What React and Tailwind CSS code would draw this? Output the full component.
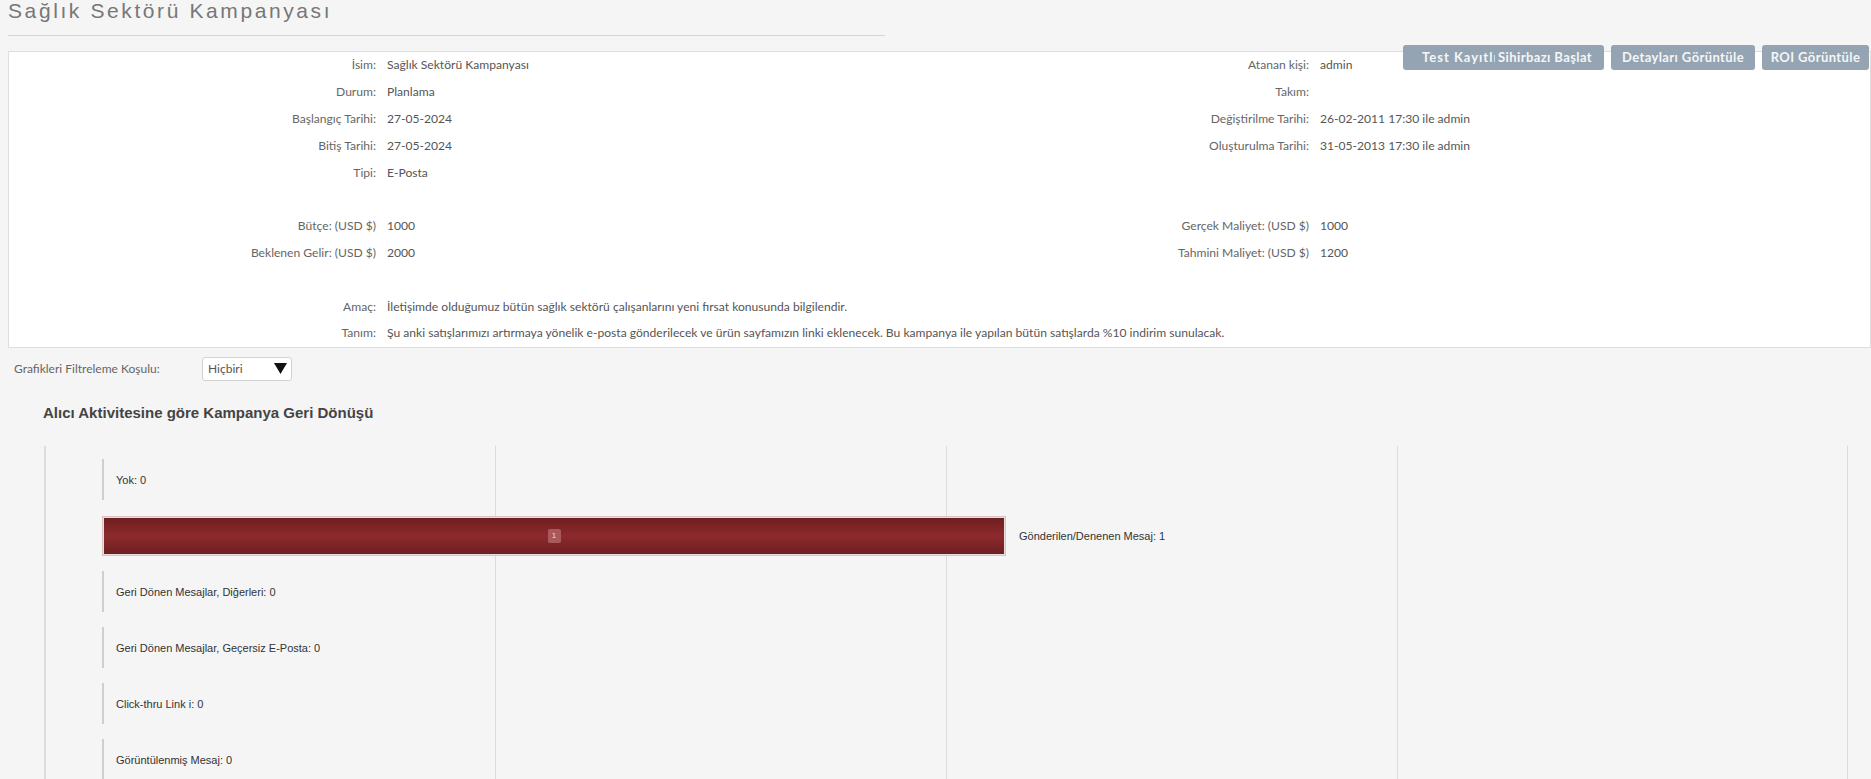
export default function App() {
  const rows = [
    ["İsim:", "Sağlık Sektörü Kampanyası", "Atanan kişi:", "admin"],
    ["Durum:", "Planlama", "Takım:", ""],
    ["Başlangıç Tarihi:", "27-05-2024", "Değiştirilme Tarihi:", "26-02-2011 17:30 ile admin"],
    ["Bitiş Tarihi:", "27-05-2024", "Oluşturulma Tarihi:", "31-05-2013 17:30 ile admin"],
    ["Tipi:", "E-Posta", "", ""],
    ["", "", "", ""],
    ["Bütçe: (USD $)", "1000", "Gerçek Maliyet: (USD $)", "1000"],
    ["Beklenen Gelir: (USD $)", "2000", "Tahmini Maliyet: (USD $)", "1200"],
    ["", "", "", ""],
  ];
  const wide = [
    ["Amaç:", "İletişimde olduğumuz bütün sağlık sektörü çalışanlarını yeni fırsat konusunda bilgilendir."],
    ["Tanım:", "Şu anki satışlarımızı artırmaya yönelik e-posta gönderilecek ve ürün sayfamızın linki eklenecek. Bu kampanya ile yapılan bütün satışlarda %10 indirim sunulacak."],
  ];
  const chartRows = [
    { label: "Yok: 0" },
    { label: "Gönderilen/Denenen Mesaj: 1", bar: true },
    { label: "Geri Dönen Mesajlar, Diğerleri: 0" },
    { label: "Geri Dönen Mesajlar, Geçersiz E-Posta: 0" },
    { label: "Click-thru Link i: 0" },
    { label: "Görüntülenmiş Mesaj: 0" },
  ];
  return (
    <div className="w-[1871px] h-[779px] overflow-hidden bg-[#f5f5f5] font-['Lato','Liberation_Sans',sans-serif] text-[#666]">
      <div className="pl-2">
        <h2 className="h-[26px] leading-[22px] text-[21px] tracking-[2.6px] text-[#777] font-['Liberation_Sans',sans-serif] font-normal">
          Sağlık Sektörü Kampanyası
        </h2>
        <div className="w-[877px] mt-[9px] border-b border-[#d5d5d5]"></div>
      </div>

      <div className="relative ml-2 mt-[15px] bg-white border border-[#dedede] text-[12.1px]">
        <div className="absolute top-[-7px] right-[1px] flex gap-[7px] text-[13px] tracking-[0.4px] font-bold text-[#f4f6f8]">
          <div className="w-[201px] h-[25px] rounded-[3px] bg-[#94a4b2] flex items-center pl-[19px]">
            <span className="w-[73px] overflow-hidden whitespace-nowrap tracking-[1px]">Test Kayıtlı</span>
            <span className="ml-[3px] whitespace-nowrap">Sihirbazı Başlat</span>
          </div>
          <div className="w-[144px] h-[25px] rounded-[3px] bg-[#94a4b2] flex items-center justify-center">
            Detayları Görüntüle
          </div>
          <div className="w-[107px] h-[25px] rounded-[3px] bg-[#94a4b2] flex items-center justify-center">
            ROI Görüntüle
          </div>
        </div>
        <div className="grid grid-cols-[368px_723px_209px_1fr]">
          {rows.map((r, i) => (
            <div key={i} className="contents">
              <div className="h-[26.8px] flex items-center justify-end pr-[1px] whitespace-nowrap">{r[0]}</div>
              <div className="h-[26.8px] flex items-center pl-[10px] text-[#555] whitespace-nowrap">{r[1]}</div>
              <div className="h-[26.8px] flex items-center justify-end whitespace-nowrap">{r[2]}</div>
              <div className="h-[26.8px] flex items-center pl-[11px] text-[#555] whitespace-nowrap">{r[3]}</div>
            </div>
          ))}
          {wide.map((r, i) => (
            <div key={"w" + i} className="contents">
              <div className="h-[26.8px] flex items-center justify-end pr-[1px] whitespace-nowrap">{r[0]}</div>
              <div className="col-span-3 h-[26.8px] flex items-center pl-[10px] text-[#555] whitespace-nowrap">{r[1]}</div>
            </div>
          ))}
        </div>
      </div>

      <div className="flex items-center mt-[9px] pl-[14px] text-[12px]">
        <span className="w-[188px]">Grafikleri Filtreleme Koşulu:</span>
        <div className="w-[90px] h-[24px] bg-white border border-[#d2d2d2] rounded-[3px] flex items-center justify-between pl-[5px] pr-[4px] text-[#555]">
          <span>Hiçbiri</span>
          <svg width="13" height="11" viewBox="0 0 13 11"><path d="M0 0 H13 L6.5 11 Z" fill="#111" /></svg>
        </div>
      </div>

      <div className="mt-[23px] pl-[43px] h-[18px] leading-[18px] text-[15px] font-bold text-[#444] font-['Liberation_Sans',sans-serif]">
        Alıcı Aktivitesine göre Kampanya Geri Dönüşü
      </div>

      <div className="relative ml-[44px] mt-[24px] w-[1806px] h-[340px] font-['Liberation_Sans',sans-serif] text-[11px] text-[#333]">
        <div className="absolute inset-0 flex">
          <div className="w-[451px] border-l-2 border-[#dcdcdc]"></div>
          <div className="w-[451px] border-l border-[#dcdcdc]"></div>
          <div className="w-[451px] border-l border-[#dcdcdc]"></div>
          <div className="w-[451px] border-l border-r border-[#dcdcdc]"></div>
        </div>
        <div className="relative pt-[6px]">
          {chartRows.map((r, i) => (
            <div key={i} className="h-[56px] flex items-center pl-[58px]">
              {r.bar ? (
                <div className="flex items-center">
                  <div className="w-[904px] h-[40px] border border-[#d9c4c4] p-[1px] bg-[#e9dede]">
                    <div className="w-full h-full bg-gradient-to-b from-[#6f1e20] via-[#8c2a2d] to-[#6e1f21] flex items-center justify-center">
                      <span className="w-[13px] h-[14px] rounded-[2px] bg-[#a9595b] text-[#ecd6d6] text-[8px] leading-[14px] text-center">1</span>
                    </div>
                  </div>
                  <span className="ml-[13px] whitespace-nowrap">{r.label}</span>
                </div>
              ) : (
                <div className="h-[41px] border-l-2 border-[#cfcfcf] flex items-center pl-[12px] whitespace-nowrap">
                  {r.label}
                </div>
              )}
            </div>
          ))}
        </div>
      </div>
    </div>
  );
}
